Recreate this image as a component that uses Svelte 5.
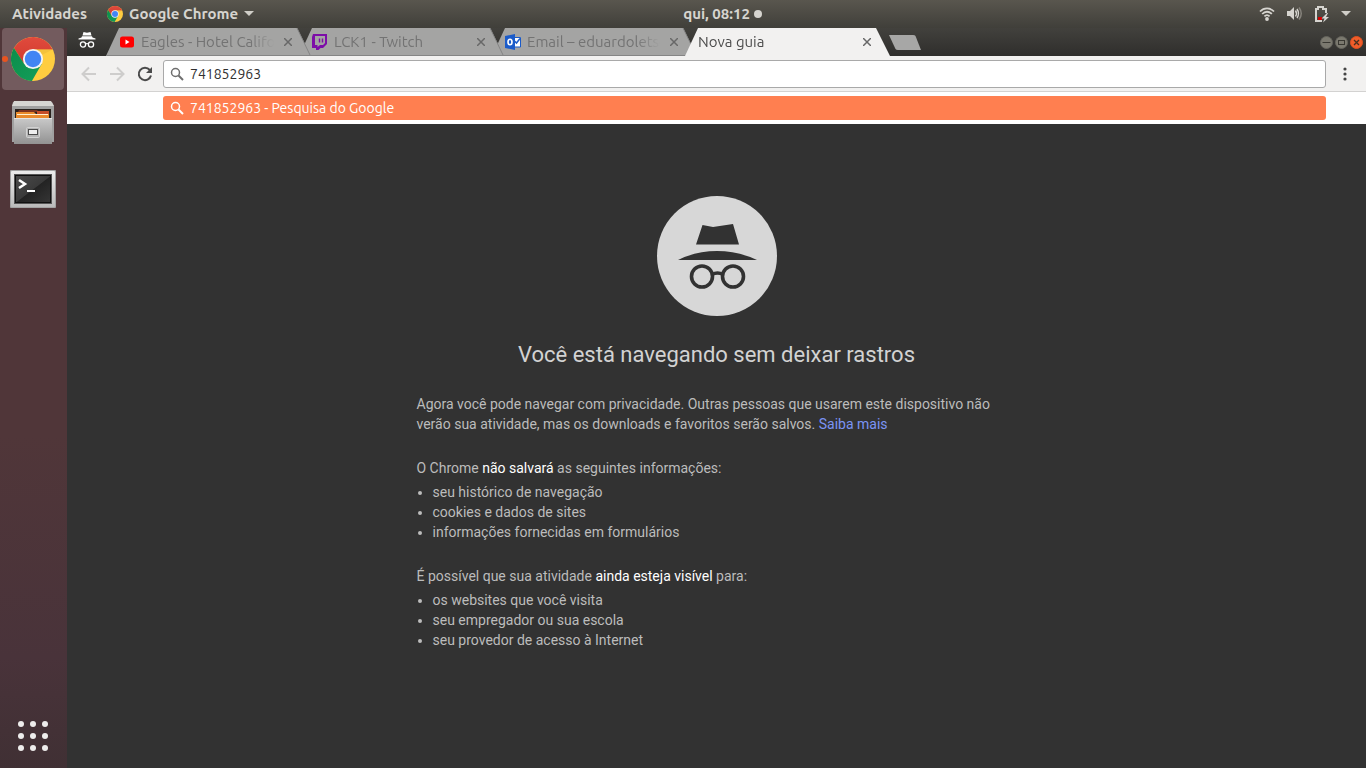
<script>
  let query = $state('741852963');
  const tabs = [
    { id: 'youtube', title: 'Eagles - Hotel California' },
    { id: 'twitch', title: 'LCK1 - Twitch' },
    { id: 'outlook', title: 'Email – eduardoletsch' },
    { id: 'new', title: 'Nova guia', active: true }
  ];
  const dots = [3, 15, 27];
</script>

{#snippet chrome(size, id)}
  <svg width={size} height={size} viewBox="0 0 48 48" aria-hidden="true">
    <defs>
      <linearGradient id={id + 'r'} x1="0" y1="0" x2="0" y2="1"><stop offset="0" stop-color="#e04a3d" /><stop offset="1" stop-color="#d23b2e" /></linearGradient>
      <linearGradient id={id + 'g'} x1="0" y1="0" x2="1" y2="1"><stop offset="0" stop-color="#0b8d4b" /><stop offset="1" stop-color="#149e5a" /></linearGradient>
    </defs>
    <circle cx="24" cy="24" r="24" fill="#ffcd40" />
    <path d="M24 24 L14 29 L3.2 12 A24 24 0 0 1 45.5 13.5 H24Z" fill="url(#{id}r)" />
    <path d="M3.2 12 A24 24 0 0 0 22.8 48 L33.5 29.5 L24 24 L14.5 29.5Z" fill="url(#{id}g)" />
    <path d="M24 13.5 L45.5 13.5 L33 20Z" fill="#e7b83a" opacity=".5" />
    <circle cx="24" cy="24" r="11" fill="#f4f4f4" />
    <circle cx="24" cy="24" r="9" fill="#4285f4" />
  </svg>
{/snippet}

{#snippet magnifier()}
  <svg class="magnifier" width="14" height="14" viewBox="0 0 14 14" fill="none" stroke="currentColor" aria-hidden="true">
    <circle cx="5.5" cy="5.5" r="4" stroke-width="1.5" />
    <path d="M8.5 8.5 L13 13" stroke-width="2" />
  </svg>
{/snippet}

<div class="desktop">
  <header class="topbar">
    <div class="side">
      <button class="activities">Atividades</button>
      <button class="appmenu">
        {@render chrome(16, 'small')}
        <span>Google Chrome</span>
        <svg width="10" height="5" viewBox="0 0 10 5" aria-hidden="true"><path d="M0 0H10L5 5Z" fill="#d0cec8" /></svg>
      </button>
    </div>
    <button class="clock">qui, 08:12<span class="dot"></span></button>
    <div class="side end">
      <button class="status" aria-label="Sistema">
        <svg width="16" height="16" viewBox="0 0 16 16" fill="none" stroke="#d6d4cf" stroke-width="1.8" aria-hidden="true">
          <path d="M1 5.5C5 1.3 11 1.3 15 5.5M3.2 8C6 5 10 5 12.8 8M5.4 10.4C7 8.8 9 8.8 10.6 10.4" />
          <circle cx="8" cy="13" r="1.9" fill="#d6d4cf" stroke="none" />
        </svg>
        <svg width="17" height="16" viewBox="0 0 17 16" aria-hidden="true">
          <path d="M1 5H4L8 1V14L4 10H1Z" fill="#d6d4cf" />
          <path d="M9.5 4.5Q11.5 7.5 9.5 10.5M11 3Q14 7.5 11 12" fill="none" stroke="#d6d4cf" stroke-width="1.4" />
          <path d="M13 1.5Q17.5 7.5 13 13.5" fill="none" stroke="#85827b" stroke-width="1.5" />
        </svg>
        <svg class="battery" width="16" height="18" viewBox="0 0 16 18" aria-hidden="true">
          <path d="M8 16H2V4H4V2H9V4H12V8" fill="none" stroke="#d6d4cf" stroke-width="2" />
          <path d="M4 12H8V15H4Z" fill="#d40000" />
          <path d="M13 8L7.500 13.500H10.500L9 17.500L15 12H12L14 8Z" fill="#d6d4cf" />
        </svg>
        <svg width="10" height="5" viewBox="0 0 10 5" aria-hidden="true"><path d="M0 0H10L5 5Z" fill="#d0cec8" /></svg>
      </button>
    </div>
  </header>

  <div class="workspace">
    <nav class="dock" aria-label="Dock">
      <button class="app running" aria-label="Google Chrome"><span class="pip"></span>{@render chrome(44, 'large')}</button>
      <button class="app" aria-label="Arquivos">
        <svg width="44" height="48" viewBox="0 0 44 48" aria-hidden="true">
          <defs><linearGradient id="cab" x1="0" y1="0" x2="0" y2="1"><stop offset="0" stop-color="#c9c9c9" /><stop offset="1" stop-color="#929292" /></linearGradient></defs>
          <path d="M2 2H41L43 6V42H1V6Z" fill="#a0a0a0" />
          <path d="M3 1H40L43 6H1Z" fill="#d6d5d2" />
          <path d="M4 9H40V19H4Z" fill="#29221e" />
          <path d="M8 10H26L28 12H7Z" fill="#7c3320" />
          <path d="M26 11H38V14H26Z" fill="#c44d28" />
          <path d="M5 12H23L25 14H38V19H5Z" fill="#e98a2c" />
          <path d="M6 14H37V15H6Z" fill="#fff0d0" />
          <path d="M3 18H41V44H3Z" fill="url(#cab)" />
          <path d="M3 18H41V19H3Z" fill="#e5e5e5" />
          <rect x="15.500" y="27.500" width="13" height="10" rx="1" fill="#b5b5b5" stroke="#d2d2d2" />
          <rect x="17.500" y="29.500" width="9" height="5" fill="#eee" stroke="#4b4b4b" />
        </svg>
      </button>
      <button class="app" aria-label="Terminal">
        <svg width="46" height="38" viewBox="0 0 46 38" aria-hidden="true">
          <defs>
            <linearGradient id="frame" x1="0" y1="0" x2="0" y2="1"><stop offset="0" stop-color="#ededed" /><stop offset="1" stop-color="#bababa" /></linearGradient>
            <linearGradient id="screen" x1="0" y1="0" x2="1" y2="1"><stop offset="0" stop-color="#4a4a4a" /><stop offset=".5" stop-color="#3a3a3a" /><stop offset=".52" stop-color="#232323" /><stop offset="1" stop-color="#353535" /></linearGradient>
          </defs>
          <rect x="0" y="0" width="46" height="38" rx="1" fill="#a2a2a2" />
          <rect x="1" y="1" width="44" height="36" rx="1" fill="url(#frame)" />
          <rect x="4" y="4" width="38" height="30" fill="#555" />
          <rect x="5" y="5" width="36" height="28" fill="#111" />
          <rect x="6" y="6" width="34" height="26" fill="url(#screen)" />
          <path d="M9 10L15 14L9 18" fill="none" stroke="#fff" stroke-width="2.500" />
          <path d="M17 21H25" stroke="#fff" stroke-width="2" />
        </svg>
      </button>
      <button class="launcher" aria-label="Mostrar aplicativos">
        <svg width="30" height="30" viewBox="0 0 30 30" fill="#eeedec" aria-hidden="true">
          {#each dots as y}{#each dots as x}<circle cx={x} cy={y} r="3" />{/each}{/each}
        </svg>
      </button>
    </nav>

    <main class="browser">
      <div class="tabstrip">
        <svg class="incognito" width="18" height="16" viewBox="0 0 18 16" aria-hidden="true">
          <path d="M5.500 0L9 .7L12.500 0L13.500 3.500H4.500Z" fill="#fff" />
          <path d="M4 4.300H14L14.500 5.500L17.500 6.500V7.500H.5V6.500L3.500 5.500Z" fill="#fff" />
          <circle cx="5" cy="12.500" r="2.600" fill="none" stroke="#fff" stroke-width="1.300" />
          <circle cx="13" cy="12.500" r="2.600" fill="none" stroke="#fff" stroke-width="1.300" />
          <path d="M7.500 12Q9 11 10.500 12" fill="none" stroke="#fff" stroke-width="1.200" />
        </svg>
        <div class="tabs">
          {#each tabs as tab, i}
            <div class="tab" class:active={tab.active} style="z-index: {tab.active ? 9 : 5 - i}">
              <svg class="shape" viewBox="0 0 205 28" preserveAspectRatio="none" aria-hidden="true">
                <path d="M0 28L13 0H191L205 28Z" fill={tab.active ? '#f2f1f0' : '#a4a4a3'} />
                {#if !tab.active}<path d="M191 0L204.500 28M0 27.500H205" fill="none" stroke="#858585" />{/if}
              </svg>
              {#if tab.id === 'youtube'}
                <svg class="favicon" width="16" height="16" viewBox="0 0 16 16" aria-hidden="true"><rect x="1" y="2.500" width="14" height="11" rx="2.500" fill="#f00" /><path d="M6.500 5.500L10.500 8L6.500 10.500Z" fill="#fff" /></svg>
              {:else if tab.id === 'twitch'}
                <svg class="favicon" width="16" height="16" viewBox="0 0 16 16" aria-hidden="true"><path d="M1 0H15V10L11 14H8.500L6.500 16H4V14H0V3Z" fill="#7d0da8" /><path d="M3 2H13V9L11 11H8L5.500 13V11H3Z" fill="#a4a4a3" /><path d="M7.500 4.500V8.500M10.500 4.500V8.500" stroke="#7d0da8" stroke-width="1.400" /></svg>
              {:else if tab.id === 'outlook'}
                <svg class="favicon" width="16" height="16" viewBox="0 0 16 16" aria-hidden="true"><path d="M9 3.500H15.500V13H9Z" fill="#fff" stroke="#1b5bc9" /><path d="M9.500 7L11.500 9L15 4.500" fill="none" stroke="#1b5bc9" stroke-width="1.500" /><path d="M0 2L10 0V16L0 14Z" fill="#1b5bc9" /><ellipse cx="5" cy="8" rx="2" ry="2.800" fill="none" stroke="#fff" stroke-width="1.600" /></svg>
              {/if}
              <a class="title" href="#{tab.id}">{tab.title}</a>
              <button class="close" aria-label="Fechar guia">
                <svg width="8" height="8" viewBox="0 0 8 8" aria-hidden="true"><path d="M0 0L8 8M8 0L0 8" stroke="currentColor" stroke-width="1.500" /></svg>
              </button>
            </div>
          {/each}
        </div>
        <button class="newtab" aria-label="Nova guia">
          <svg width="32" height="15" viewBox="0 0 32 15" aria-hidden="true"><path d="M0 0H24Q26 0 26.500 1L32 15H9Q7 15 6.500 14Z" fill="#a7a7a6" /></svg>
        </button>
        <div class="controls">
          <button aria-label="Minimizar"><svg width="13" height="13" viewBox="0 0 13 13"><circle cx="6.500" cy="6.500" r="6" fill="#7b796f" stroke="#65645d" /><path d="M2.500 6.500H10.500" stroke="#393832" /></svg></button>
          <button aria-label="Maximizar"><svg width="13" height="13" viewBox="0 0 13 13"><circle cx="6.500" cy="6.500" r="6" fill="#7b796f" stroke="#65645d" /><rect x="3.500" y="4.500" width="6" height="4" fill="none" stroke="#393832" /></svg></button>
          <button aria-label="Fechar"><svg width="13" height="13" viewBox="0 0 13 13"><circle cx="6.500" cy="6.500" r="6" fill="#f15d2a" stroke="#e0501f" /><path d="M4 4L9 9M9 4L4 9" stroke="#49301f" stroke-width="1.300" /></svg></button>
        </div>
      </div>

      <div class="toolbar">
        <div class="navigation">
          <button aria-label="Voltar"><svg width="16" height="16" viewBox="0 0 16 16" fill="none" stroke="#cecdcc" stroke-width="2"><path d="M15 8H2M8 1.500L1.500 8L8 14.500" /></svg></button>
          <button aria-label="Avançar"><svg width="16" height="16" viewBox="0 0 16 16" fill="none" stroke="#cecdcc" stroke-width="2"><path d="M1 8H14M8 1.500L14.500 8L8 14.500" /></svg></button>
          <button aria-label="Recarregar"><svg width="16" height="16" viewBox="0 0 16 16"><path d="M12.800 4A6.200 6.200 0 1 0 14 9.500" fill="none" stroke="#4b4b4b" stroke-width="2" /><path d="M15 1V7H9Z" fill="#4b4b4b" /></svg></button>
        </div>
        <label class="omnibox">
          {@render magnifier()}
          <input type="text" aria-label="Barra de endereço" bind:value={query} />
        </label>
        <button class="menu" aria-label="Menu">
          <svg width="4" height="14" viewBox="0 0 4 14" fill="#444" aria-hidden="true"><circle cx="2" cy="2" r="1.600" /><circle cx="2" cy="7" r="1.600" /><circle cx="2" cy="12" r="1.600" /></svg>
        </button>
      </div>

      <div class="suggestions">
        <button class="suggestion">{@render magnifier()}<span>{query} - Pesquisa do Google</span></button>
      </div>

      <section class="page">
        <svg class="badge" width="120" height="120" viewBox="0 0 120 120" aria-hidden="true">
          <circle cx="60" cy="60" r="60" fill="#d7d7d7" />
          <g fill="#323232">
            <path d="M45.500 29L56 31L76 28L82 48.500H39Z" />
            <path d="M21 64Q39 55 60 55Q81 55 100 64Z" />
            <g fill="none" stroke="#323232" stroke-width="3.600">
              <circle cx="45" cy="80.500" r="10.500" />
              <circle cx="76" cy="80.500" r="10.500" />
              <path d="M55 78.500Q60.500 75.500 66 78.500" />
            </g>
          </g>
        </svg>
        <h1>Você está navegando sem deixar rastros</h1>
        <div class="copy">
          <p>Agora você pode navegar com privacidade. Outras pessoas que usarem este dispositivo não verão sua atividade, mas os downloads e favoritos serão salvos. <a href="#saiba-mais">Saiba mais</a></p>
          <div class="group">
            <p>O Chrome <em>não salvará</em> as seguintes informações:</p>
            <ul>
              <li>seu histórico de navegação</li>
              <li>cookies e dados de sites</li>
              <li>informações fornecidas em formulários</li>
            </ul>
          </div>
          <div class="group">
            <p>É possível que sua atividade <em>ainda esteja visível</em> para:</p>
            <ul>
              <li>os websites que você visita</li>
              <li>seu empregador ou sua escola</li>
              <li>seu provedor de acesso à Internet</li>
            </ul>
          </div>
        </div>
      </section>
    </main>
  </div>
</div>

<style>
  :global(body) { margin: 0; background: #323232; }
  .desktop { min-height: 100vh; display: flex; flex-direction: column; font: 14px/20px Ubuntu, "Noto Sans", sans-serif; }
  button { border: 0; padding: 0; background: none; color: inherit; font: inherit; display: flex; align-items: center; }
  svg { display: block; flex: none; }

  .topbar { height: 28px; box-sizing: border-box; padding-bottom: 1px; display: flex; align-items: center; background: linear-gradient(#59564e, #403f3a); color: #d6d4cf; font-size: 15px; font-weight: 700; }
  .side { flex: 1; display: flex; align-items: center; padding-left: 12px; gap: 20px; }
  .appmenu { gap: 6px; }
  .clock { gap: 4px; padding-left: 82px; }
  .dot { width: 8px; height: 8px; border-radius: 50%; background: #d6d4cf; }
  .end { justify-content: flex-end; padding: 0 15px 0 0; }
  .status { gap: 11px; }

  .workspace { flex: 1; display: flex; }
  .dock { width: 67px; flex: none; box-sizing: border-box; padding: 0 3px 17px 2px; display: flex; flex-direction: column; gap: 3px; background: linear-gradient(#503639, #503639 55%, #49333a 85%, #403034); }
  .app { position: relative; height: 62px; justify-content: center; border-radius: 4px; }
  .running { background: #735b5e; }
  .pip { position: absolute; left: 0; top: 28px; width: 6px; height: 6px; border-radius: 50%; background: #e95420; }
  .launcher { margin-top: auto; justify-content: center; }

  .browser { flex: 1; min-width: 0; display: flex; flex-direction: column; }
  .tabstrip { height: 28px; display: flex; background: linear-gradient(#42413d, #2f2e2c); }
  .incognito { margin: 4px 10px 0 11px; }
  .tabs { display: flex; min-width: 0; }
  .tab { position: relative; width: 205px; min-width: 0; box-sizing: border-box; margin-right: -12px; padding: 0 19px 0 13px; display: flex; align-items: center; color: #737373; font-size: 15px; }
  .tab.active { color: #4c4c4c; }
  .shape { position: absolute; inset: 0; width: 100%; height: 100%; }
  .favicon { position: relative; margin-right: 6px; }
  .title { position: relative; flex: 1; min-width: 0; overflow: hidden; white-space: nowrap; color: inherit; text-decoration: none; -webkit-mask-image: linear-gradient(to left, transparent, #000 24px); mask-image: linear-gradient(to left, transparent, #000 24px); }
  .close { position: relative; margin-left: 10px; color: #686868; }
  .newtab { margin-left: 11px; align-self: center; }
  .controls { display: flex; gap: 2px; margin-left: auto; padding-right: 3px; }

  .toolbar { height: 36px; box-sizing: border-box; display: flex; align-items: center; background: #f2f1f0; border-bottom: 1px solid #d3d2d1; }
  .navigation { width: 96px; box-sizing: border-box; padding-left: 14px; display: flex; gap: 12px; flex: none; }
  .omnibox { flex: 1; min-width: 0; height: 28px; box-sizing: border-box; border: 1px solid #a9a9a9; border-radius: 3px; background: #fff; display: flex; align-items: center; padding: 0 6px; gap: 6px; color: #6e6e6e; }
  .omnibox input { flex: 1; min-width: 0; border: 0; outline: 0; padding: 0; background: none; color: #303030; font: inherit; }
  .menu { width: 40px; justify-content: center; flex: none; padding-right: 3px; }
  .suggestions { padding: 4px 40px 4px 96px; background: #fff; }
  .suggestion { width: 100%; height: 24px; padding: 0 7px; gap: 6px; border-radius: 3px; background: #ff7f50; color: #fff; }

  .page { flex: 1; display: flex; flex-direction: column; align-items: center; padding: 72px 24px 24px; background: #323232; color: #bcbcbc; font-family: Roboto, sans-serif; }
  h1 { margin: 24px 0 0; font-size: 22px; line-height: 30px; font-weight: 400; color: #d2d2d2; }
  .copy { width: 100%; max-width: 600px; margin-top: 24px; display: flex; flex-direction: column; gap: 24px; }
  p { margin: 0; }
  .copy a { color: #7b94f5; text-decoration: none; }
  em { color: #fff; font-style: normal; }
  ul { margin: 4px 0 0; padding-left: 16px; }
</style>
